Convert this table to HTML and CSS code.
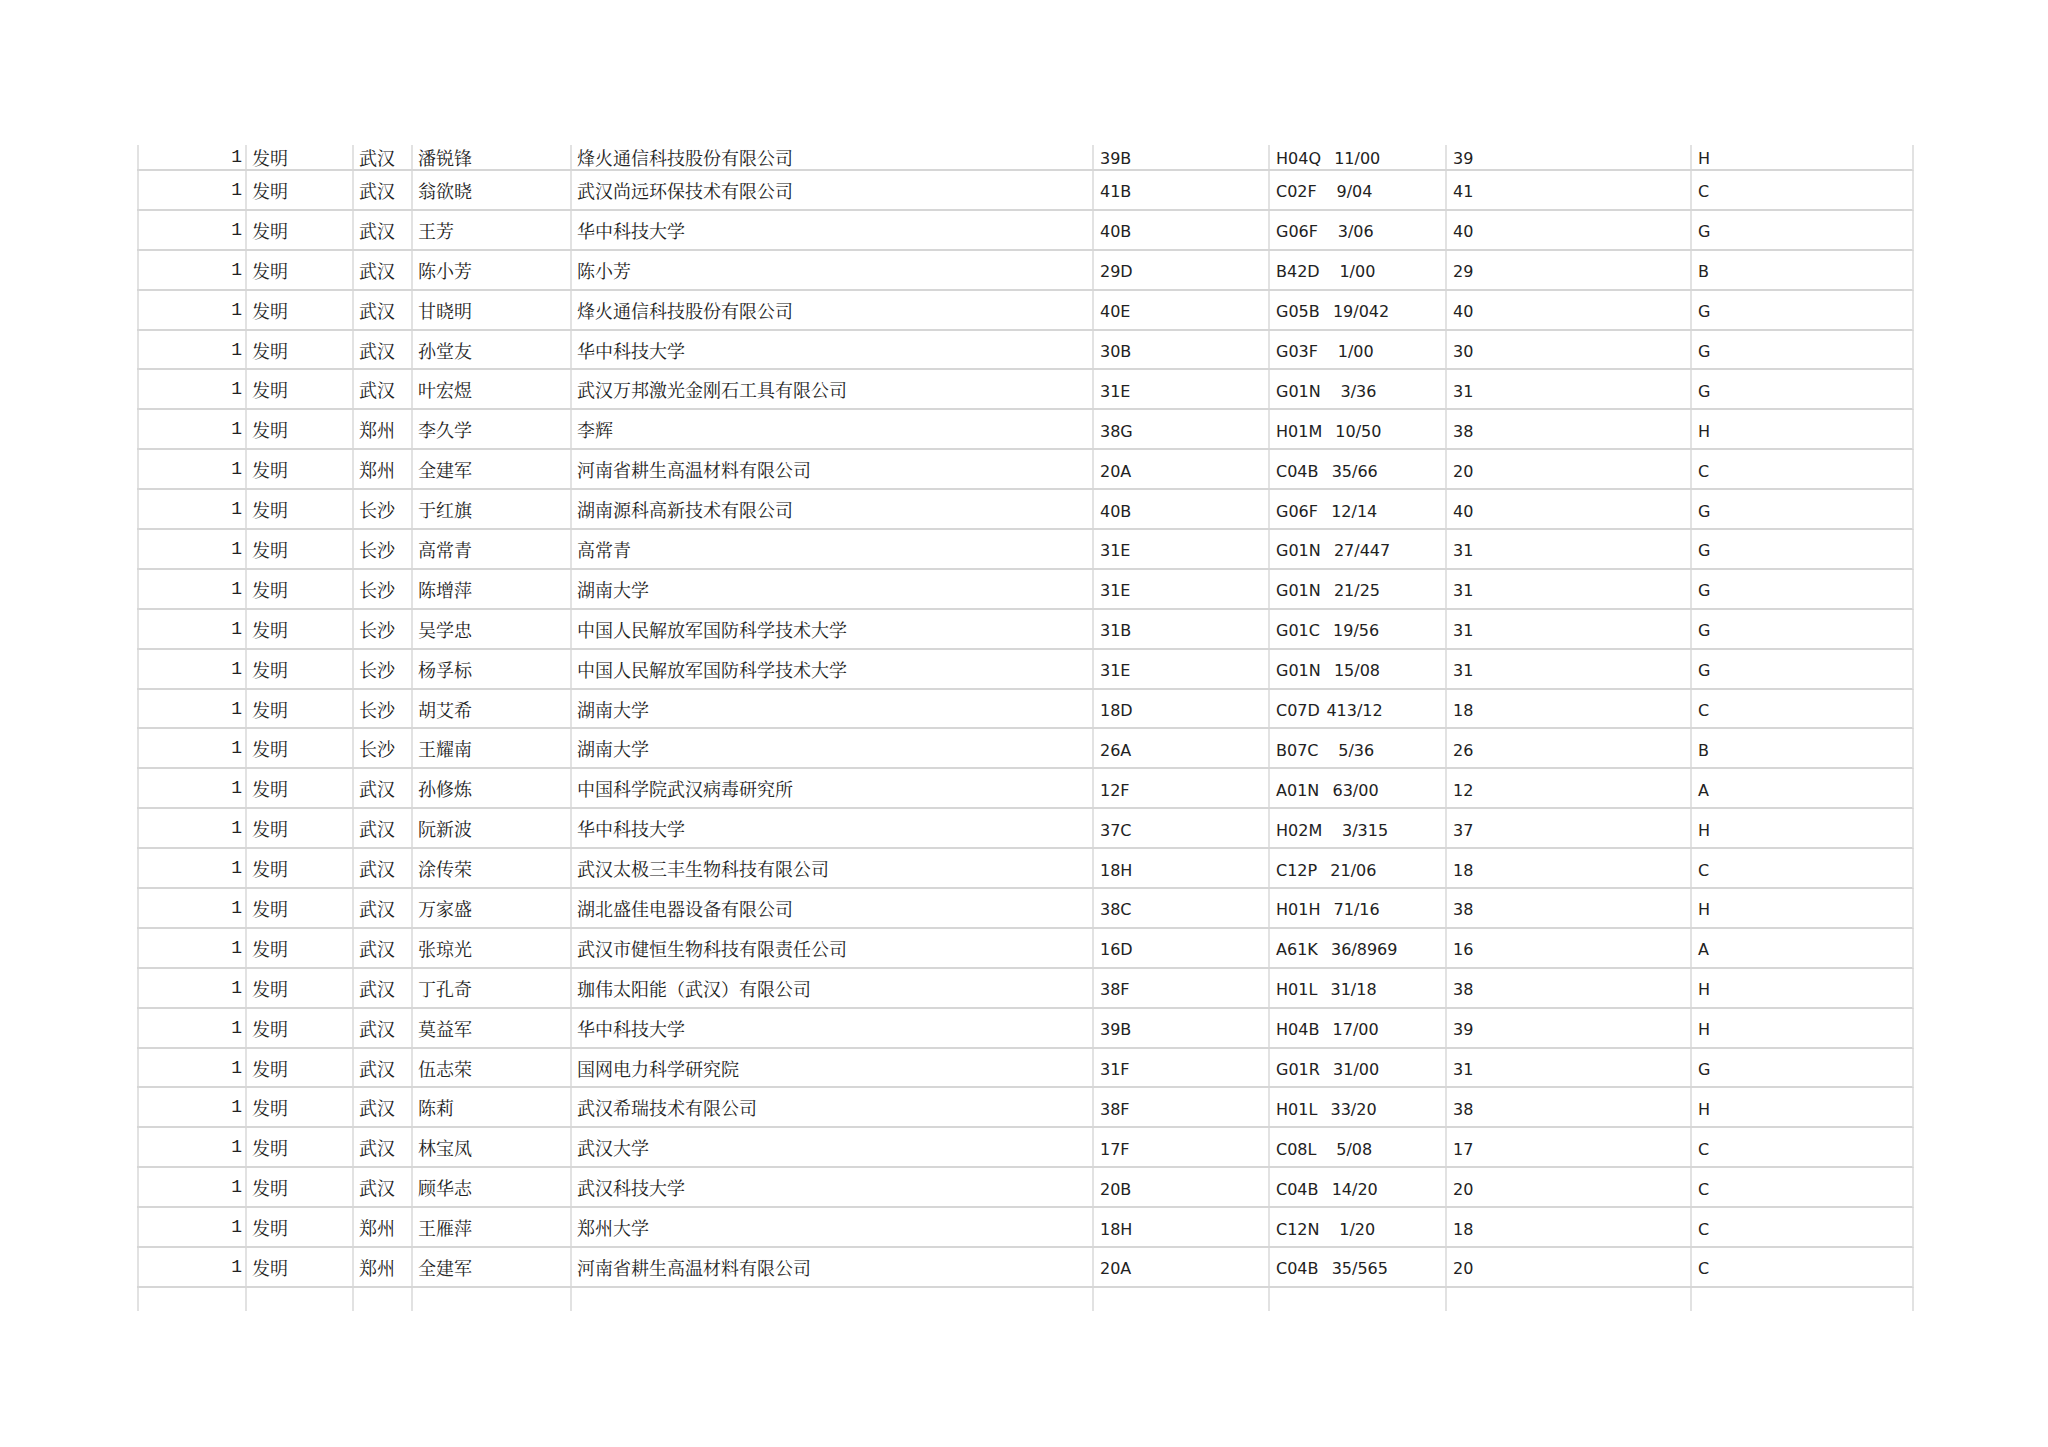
FILE: index.html
```html
<!DOCTYPE html>
<html lang="zh-CN">
<head>
<meta charset="utf-8">
<title>专利列表</title>
<link rel="stylesheet" href="styles.css">
</head>
<body>
<div class="sheet">
  <div class="row first"><div class="c n">1</div><div class="c z">发明</div><div class="c z">武汉</div><div class="c z">潘锐锋</div><div class="c z">烽火通信科技股份有限公司</div><div class="c l">39B</div><div class="c l">H04Q  11/00</div><div class="c l">39</div><div class="c l">H</div></div>
  <div class="row"><div class="c n">1</div><div class="c z">发明</div><div class="c z">武汉</div><div class="c z">翁欲晓</div><div class="c z">武汉尚远环保技术有限公司</div><div class="c l">41B</div><div class="c l">C02F   9/04</div><div class="c l">41</div><div class="c l">C</div></div>
  <div class="row"><div class="c n">1</div><div class="c z">发明</div><div class="c z">武汉</div><div class="c z">王芳</div><div class="c z">华中科技大学</div><div class="c l">40B</div><div class="c l">G06F   3/06</div><div class="c l">40</div><div class="c l">G</div></div>
  <div class="row"><div class="c n">1</div><div class="c z">发明</div><div class="c z">武汉</div><div class="c z">陈小芳</div><div class="c z">陈小芳</div><div class="c l">29D</div><div class="c l">B42D   1/00</div><div class="c l">29</div><div class="c l">B</div></div>
  <div class="row"><div class="c n">1</div><div class="c z">发明</div><div class="c z">武汉</div><div class="c z">甘晓明</div><div class="c z">烽火通信科技股份有限公司</div><div class="c l">40E</div><div class="c l">G05B  19/042</div><div class="c l">40</div><div class="c l">G</div></div>
  <div class="row"><div class="c n">1</div><div class="c z">发明</div><div class="c z">武汉</div><div class="c z">孙堂友</div><div class="c z">华中科技大学</div><div class="c l">30B</div><div class="c l">G03F   1/00</div><div class="c l">30</div><div class="c l">G</div></div>
  <div class="row"><div class="c n">1</div><div class="c z">发明</div><div class="c z">武汉</div><div class="c z">叶宏煜</div><div class="c z">武汉万邦激光金刚石工具有限公司</div><div class="c l">31E</div><div class="c l">G01N   3/36</div><div class="c l">31</div><div class="c l">G</div></div>
  <div class="row"><div class="c n">1</div><div class="c z">发明</div><div class="c z">郑州</div><div class="c z">李久学</div><div class="c z">李辉</div><div class="c l">38G</div><div class="c l">H01M  10/50</div><div class="c l">38</div><div class="c l">H</div></div>
  <div class="row"><div class="c n">1</div><div class="c z">发明</div><div class="c z">郑州</div><div class="c z">全建军</div><div class="c z">河南省耕生高温材料有限公司</div><div class="c l">20A</div><div class="c l">C04B  35/66</div><div class="c l">20</div><div class="c l">C</div></div>
  <div class="row"><div class="c n">1</div><div class="c z">发明</div><div class="c z">长沙</div><div class="c z">于红旗</div><div class="c z">湖南源科高新技术有限公司</div><div class="c l">40B</div><div class="c l">G06F  12/14</div><div class="c l">40</div><div class="c l">G</div></div>
  <div class="row"><div class="c n">1</div><div class="c z">发明</div><div class="c z">长沙</div><div class="c z">高常青</div><div class="c z">高常青</div><div class="c l">31E</div><div class="c l">G01N  27/447</div><div class="c l">31</div><div class="c l">G</div></div>
  <div class="row"><div class="c n">1</div><div class="c z">发明</div><div class="c z">长沙</div><div class="c z">陈增萍</div><div class="c z">湖南大学</div><div class="c l">31E</div><div class="c l">G01N  21/25</div><div class="c l">31</div><div class="c l">G</div></div>
  <div class="row"><div class="c n">1</div><div class="c z">发明</div><div class="c z">长沙</div><div class="c z">吴学忠</div><div class="c z">中国人民解放军国防科学技术大学</div><div class="c l">31B</div><div class="c l">G01C  19/56</div><div class="c l">31</div><div class="c l">G</div></div>
  <div class="row"><div class="c n">1</div><div class="c z">发明</div><div class="c z">长沙</div><div class="c z">杨孚标</div><div class="c z">中国人民解放军国防科学技术大学</div><div class="c l">31E</div><div class="c l">G01N  15/08</div><div class="c l">31</div><div class="c l">G</div></div>
  <div class="row"><div class="c n">1</div><div class="c z">发明</div><div class="c z">长沙</div><div class="c z">胡艾希</div><div class="c z">湖南大学</div><div class="c l">18D</div><div class="c l">C07D 413/12</div><div class="c l">18</div><div class="c l">C</div></div>
  <div class="row"><div class="c n">1</div><div class="c z">发明</div><div class="c z">长沙</div><div class="c z">王耀南</div><div class="c z">湖南大学</div><div class="c l">26A</div><div class="c l">B07C   5/36</div><div class="c l">26</div><div class="c l">B</div></div>
  <div class="row"><div class="c n">1</div><div class="c z">发明</div><div class="c z">武汉</div><div class="c z">孙修炼</div><div class="c z">中国科学院武汉病毒研究所</div><div class="c l">12F</div><div class="c l">A01N  63/00</div><div class="c l">12</div><div class="c l">A</div></div>
  <div class="row"><div class="c n">1</div><div class="c z">发明</div><div class="c z">武汉</div><div class="c z">阮新波</div><div class="c z">华中科技大学</div><div class="c l">37C</div><div class="c l">H02M   3/315</div><div class="c l">37</div><div class="c l">H</div></div>
  <div class="row"><div class="c n">1</div><div class="c z">发明</div><div class="c z">武汉</div><div class="c z">涂传荣</div><div class="c z">武汉太极三丰生物科技有限公司</div><div class="c l">18H</div><div class="c l">C12P  21/06</div><div class="c l">18</div><div class="c l">C</div></div>
  <div class="row"><div class="c n">1</div><div class="c z">发明</div><div class="c z">武汉</div><div class="c z">万家盛</div><div class="c z">湖北盛佳电器设备有限公司</div><div class="c l">38C</div><div class="c l">H01H  71/16</div><div class="c l">38</div><div class="c l">H</div></div>
  <div class="row"><div class="c n">1</div><div class="c z">发明</div><div class="c z">武汉</div><div class="c z">张琼光</div><div class="c z">武汉市健恒生物科技有限责任公司</div><div class="c l">16D</div><div class="c l">A61K  36/8969</div><div class="c l">16</div><div class="c l">A</div></div>
  <div class="row"><div class="c n">1</div><div class="c z">发明</div><div class="c z">武汉</div><div class="c z">丁孔奇</div><div class="c z">珈伟太阳能（武汉）有限公司</div><div class="c l">38F</div><div class="c l">H01L  31/18</div><div class="c l">38</div><div class="c l">H</div></div>
  <div class="row"><div class="c n">1</div><div class="c z">发明</div><div class="c z">武汉</div><div class="c z">莫益军</div><div class="c z">华中科技大学</div><div class="c l">39B</div><div class="c l">H04B  17/00</div><div class="c l">39</div><div class="c l">H</div></div>
  <div class="row"><div class="c n">1</div><div class="c z">发明</div><div class="c z">武汉</div><div class="c z">伍志荣</div><div class="c z">国网电力科学研究院</div><div class="c l">31F</div><div class="c l">G01R  31/00</div><div class="c l">31</div><div class="c l">G</div></div>
  <div class="row"><div class="c n">1</div><div class="c z">发明</div><div class="c z">武汉</div><div class="c z">陈莉</div><div class="c z">武汉希瑞技术有限公司</div><div class="c l">38F</div><div class="c l">H01L  33/20</div><div class="c l">38</div><div class="c l">H</div></div>
  <div class="row"><div class="c n">1</div><div class="c z">发明</div><div class="c z">武汉</div><div class="c z">林宝凤</div><div class="c z">武汉大学</div><div class="c l">17F</div><div class="c l">C08L   5/08</div><div class="c l">17</div><div class="c l">C</div></div>
  <div class="row"><div class="c n">1</div><div class="c z">发明</div><div class="c z">武汉</div><div class="c z">顾华志</div><div class="c z">武汉科技大学</div><div class="c l">20B</div><div class="c l">C04B  14/20</div><div class="c l">20</div><div class="c l">C</div></div>
  <div class="row"><div class="c n">1</div><div class="c z">发明</div><div class="c z">郑州</div><div class="c z">王雁萍</div><div class="c z">郑州大学</div><div class="c l">18H</div><div class="c l">C12N   1/20</div><div class="c l">18</div><div class="c l">C</div></div>
  <div class="row"><div class="c n">1</div><div class="c z">发明</div><div class="c z">郑州</div><div class="c z">全建军</div><div class="c z">河南省耕生高温材料有限公司</div><div class="c l">20A</div><div class="c l">C04B  35/565</div><div class="c l">20</div><div class="c l">C</div></div>
  <div class="row last"><div class="c"></div><div class="c"></div><div class="c"></div><div class="c"></div><div class="c"></div><div class="c"></div><div class="c"></div><div class="c"></div><div class="c"></div></div>
</div>
</body>
</html>
```

FILE: styles.css
```css
html, body {
  margin: 0;
  padding: 0;
  background: #ffffff;
}

.sheet {
  padding: 145px 0 0 137px;
  color: #222222;
}

.row {
  display: grid;
  grid-template-columns: 108px 107px 59px 159px 522px 176px 177px 245px 222px;
  width: 1777px;
  box-sizing: border-box;
  height: 39.9px;
  border-bottom: 2px solid #d6d6d6;
  border-right: 2px solid #e2e2e2;
}

.row.first {
  height: 26px;
}

.row.last {
  height: 23px;
  border-bottom: none;
}

.c {
  box-sizing: border-box;
  border-left: 2px solid #e2e2e2;
  padding: 0 5px;
  display: flex;
  align-items: center;
  white-space: pre;
  overflow: hidden;
}

.z {
  font-family: "Noto Serif CJK SC", "Noto Sans CJK SC", serif;
  font-size: 18px;
}

.n {
  justify-content: flex-end;
  padding-right: 3px;
  font-family: "Liberation Mono", "DejaVu Sans Mono", monospace;
  font-size: 18px;
}

.l {
  font-family: "DejaVu Sans", Verdana, sans-serif;
  font-size: 16px;
  word-spacing: 1.5px;
  padding-left: 6px;
  padding-top: 4px;
}

.row.first .l {
  padding-top: 2px;
}
```
